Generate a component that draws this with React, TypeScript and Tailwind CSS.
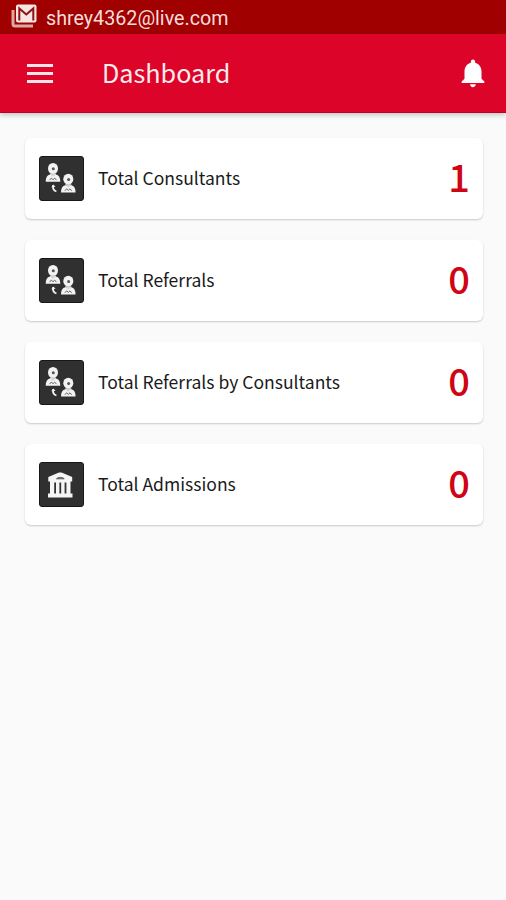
import { MdNotifications } from "react-icons/md";

interface Stat {
  label: string;
  value: number;
  icon: "people" | "building";
}

const stats: Stat[] = [
  { label: "Total Consultants", value: 1, icon: "people" },
  { label: "Total Referrals", value: 0, icon: "people" },
  { label: "Total Referrals by Consultants", value: 0, icon: "people" },
  { label: "Total Admissions", value: 0, icon: "building" },
];

function MailIcon() {
  return (
    <svg width="26" height="24" viewBox="0 0 26 24" className="mb-0.5 shrink-0">
      <path d="M2 6v14a2 2 0 0 0 2 2h18" fill="none" stroke="#dba9a5" strokeWidth="3" />
      <rect x="5" y="0.5" width="20.5" height="18" rx="2" fill="#f6e5e2" />
      <path d="M8.3 16.5V4.5L15.3 10.5L22.3 4.5V16.5" fill="none" stroke="#8f1210" strokeWidth="2" />
    </svg>
  );
}

function Person({ x, y }: { x: number; y: number }) {
  return (
    <g transform={`translate(${x} ${y})`}>
      <ellipse cx="0" cy="0" rx="5" ry="5.500" fill="#f2f2f2" />
      <path d="M-3 5h6v5h-6z" fill="#d5d5d5" />
      <circle cx="0.3" cy="0.300" r="1.500" fill="#555" />
      <path d="M-7.300 13.200c0-4 1.400-6.500 4.300-7.200l3 2.300 3-2.300c2.900.7 4.300 3.200 4.300 7.200z" fill="#f2f2f2" />
      <path d="M-3.400 11.600l1.700-2 1.700 1.600 1.700-1.600 1.700 2" fill="none" stroke="#555" strokeWidth="0.900" />
    </g>
  );
}

function PeopleIcon() {
  return (
    <svg width="45" height="45" viewBox="0 0 45 45">
      <Person x={14} y={12.500} />
      <Person x={29.300} y={23.200} />
      <path d="M14.200 29.200c-.6 3 .5 5.300 3.200 6.300" fill="none" stroke="#f2f2f2" strokeWidth="1.800" />
      <path d="M12.300 31.200l2-2.600 2.300 2.200z" fill="#f2f2f2" />
    </svg>
  );
}

function BuildingIcon() {
  return (
    <svg width="45" height="45" viewBox="0 0 45 45" fill="#f5f5f5">
      <path d="M20 10.500L9.300 15v4.500h1.700v12H9v4h24.500v-4h-2v-12h1.700V15L22.500 10.500z" />
      <path d="M15.200 20.500H17v11h-1.800zM20.400 20.500h1.800v11h-1.800zM25.600 20.500h1.800v11h-1.800z" fill="#333" />
      <path d="M17.500 16.800c1.200-1.900 6.500-1.900 7.700 0z" fill="#999" stroke="#444" strokeWidth="0.800" />
    </svg>
  );
}

function StatCard({ label, value, icon }: Stat) {
  return (
    <div className="flex h-[81px] items-center rounded-[6px] bg-white pr-[13px] pl-3.5 shadow-[0_1px_2px_rgba(0,0,0,0.2)]">
      <div className="h-[45px] w-[45px] shrink-0 rounded-[3px] border border-[#171717] bg-[#303030]">
        <div className="-m-px">{icon === "people" ? <PeopleIcon /> : <BuildingIcon />}</div>
      </div>
      <span className="ml-3.5 flex-1 pb-px text-[17.55px] leading-6 whitespace-nowrap text-[#1a1a1a]">{label}</span>
      <span className="pb-[5px] text-[38px] leading-10 font-medium text-[#cf0414]">{value}</span>
    </div>
  );
}

export default function App() {
  return (
    <div className="min-h-screen bg-[#fafafa] font-['Noto_Sans_CJK_SC',sans-serif]">
      {/* Status bar */}
      <div className="flex h-[34px] items-center bg-[#a00000] pl-[11px]">
        <MailIcon />
        <span className="ml-[9px] pt-[3px] font-[Roboto,sans-serif] text-[19.7px] leading-6 text-[#f6dcda]">
          shrey4362@live.com
        </span>
      </div>

      {/* App bar */}
      <header className="flex h-[79px] items-center border-b border-[#b80320] bg-[#dc0429] pr-[20px] pl-[27px] shadow-[0_2px_5px_rgba(0,0,0,0.22)]">
        <button aria-label="Open menu" className="flex w-[26px] flex-col gap-[5px]">
          <span className="h-[3px] bg-[#fbe3e7]" />
          <span className="h-[3px] bg-[#fbe3e7]" />
          <span className="h-[3px] bg-[#fbe3e7]" />
        </button>
        <h1 className="ml-[49px] flex-1 pb-[3px] text-[25.2px] leading-8 text-[#fdeaed]">Dashboard</h1>
        <button aria-label="Notifications">
          <MdNotifications size={34} className="-mr-1 text-white" />
        </button>
      </header>

      <main className="flex flex-col gap-[21px] pt-[25px] pr-[23px] pl-[25px]">
        {stats.map((stat) => (
          <StatCard key={stat.label} {...stat} />
        ))}
      </main>
    </div>
  );
}
